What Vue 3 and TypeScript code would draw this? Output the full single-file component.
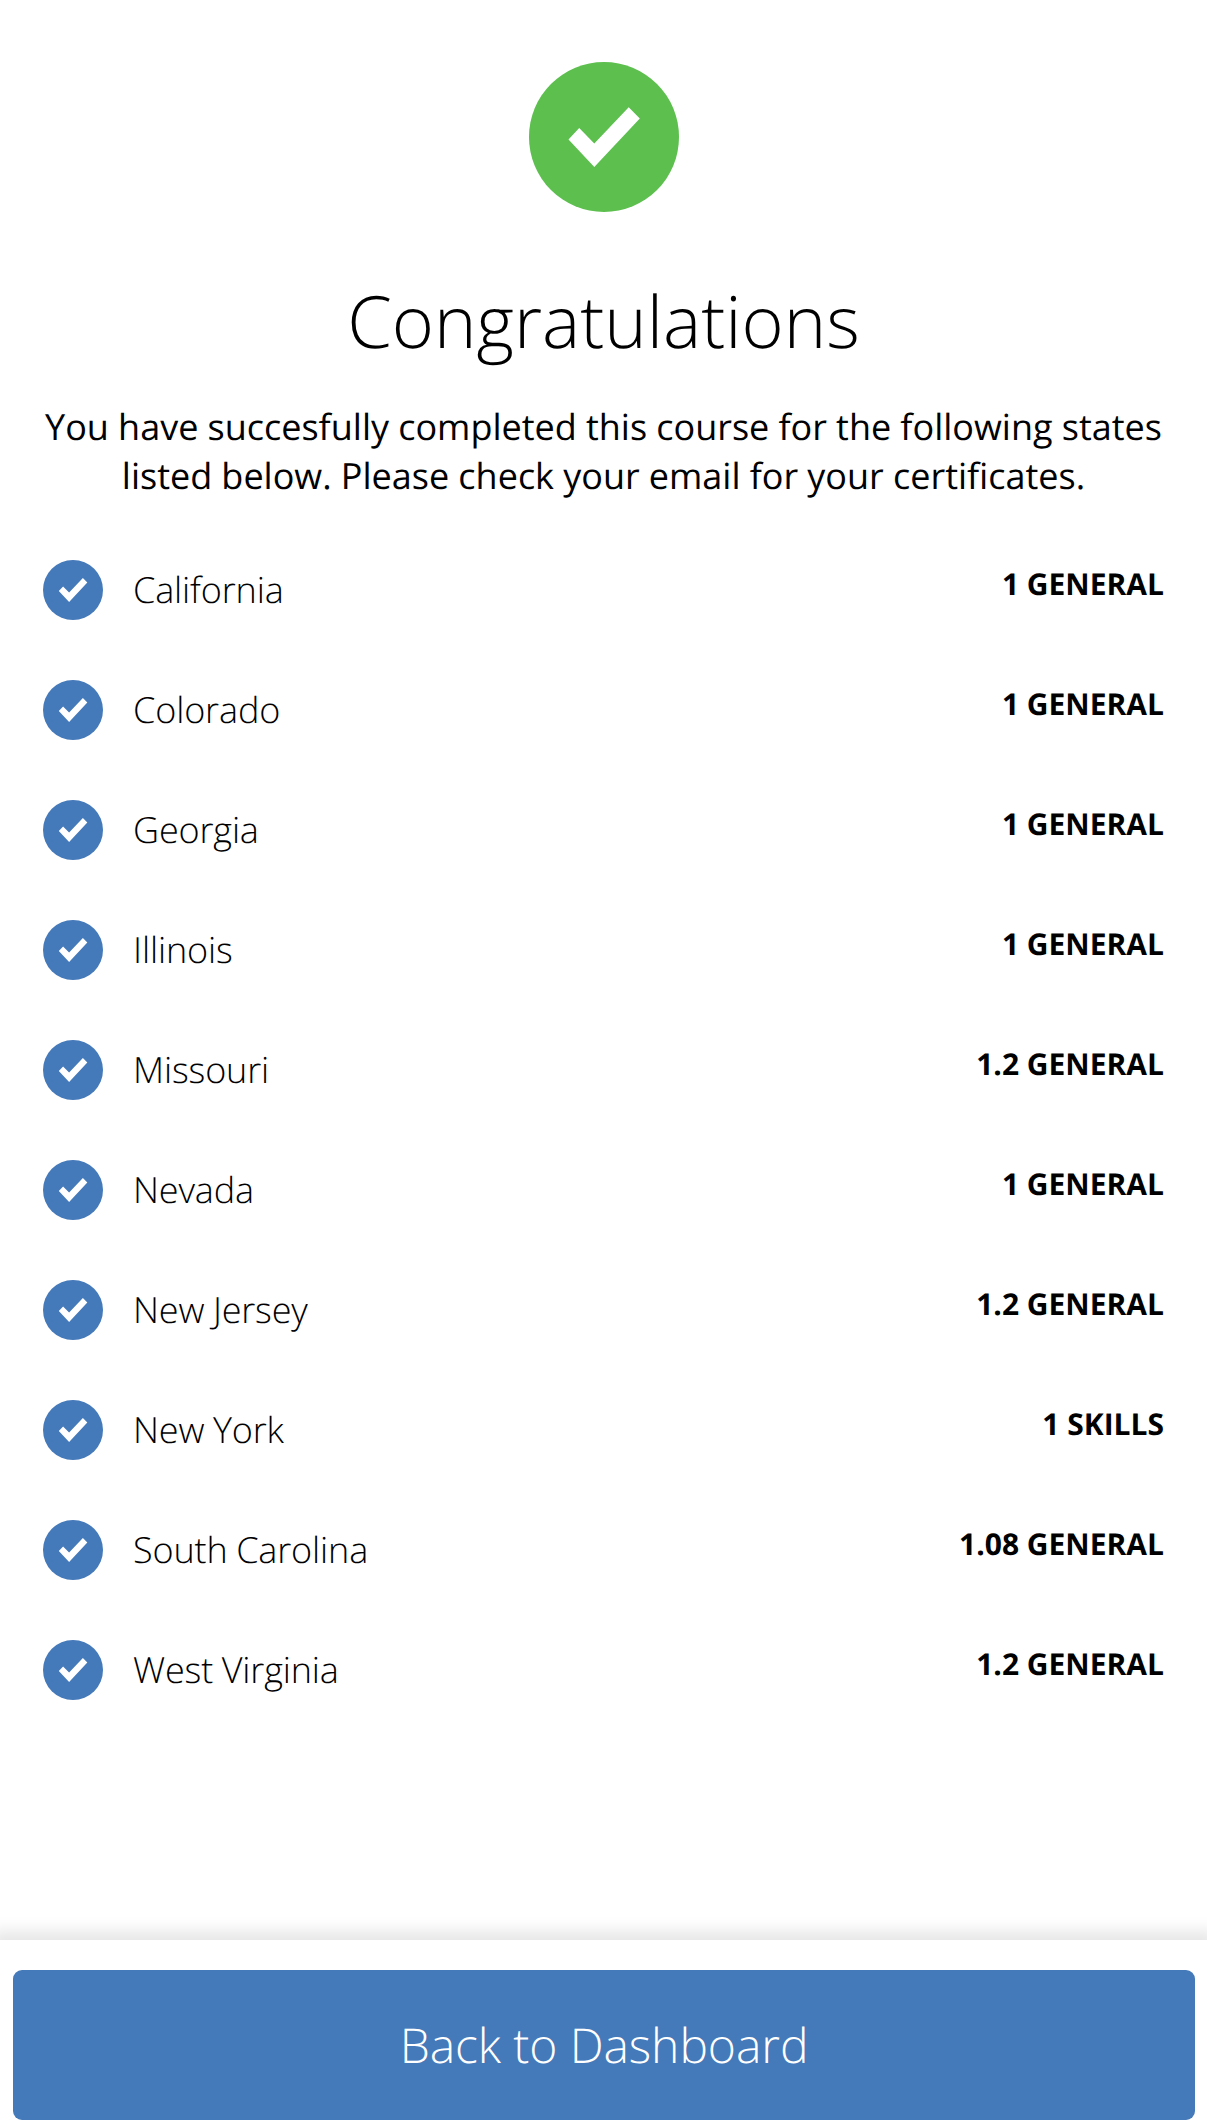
<script setup lang="ts">
interface Credit { state: string; credit: string }

const credits: Credit[] = [
  { state: 'California', credit: '1 GENERAL' },
  { state: 'Colorado', credit: '1 GENERAL' },
  { state: 'Georgia', credit: '1 GENERAL' },
  { state: 'Illinois', credit: '1 GENERAL' },
  { state: 'Missouri', credit: '1.2 GENERAL' },
  { state: 'Nevada', credit: '1 GENERAL' },
  { state: 'New Jersey', credit: '1.2 GENERAL' },
  { state: 'New York', credit: '1 SKILLS' },
  { state: 'South Carolina', credit: '1.08 GENERAL' },
  { state: 'West Virginia', credit: '1.2 GENERAL' },
]
</script>

<template>
  <main class="page">
    <section class="content">
      <svg class="hero" viewBox="0 0 150 150" aria-hidden="true">
        <circle cx="75" cy="75" r="75" fill="#5cbf4e" />
        <path d="M39.5 77.5 L50.2 66 L65.3 81.5 L99.7 45.2 L110.8 56.5 L65.3 105 Z" fill="#fff" />
      </svg>
      <h1>Congratulations</h1>
      <p class="message">You have succesfully completed this course for the following states<br />listed below. Please check your email for your certificates.</p>
      <ul class="list">
        <li v-for="item in credits" :key="item.state" class="row">
          <svg class="check" viewBox="0 0 150 150" aria-hidden="true">
            <circle cx="75" cy="75" r="75" fill="#4479ba" />
            <path d="M39.5 77.5 L50.2 66 L65.3 81.5 L99.7 45.2 L110.8 56.5 L65.3 105 Z" fill="#fff" />
          </svg>
          <span class="state">{{ item.state }}</span>
          <span class="credit">{{ item.credit }}</span>
        </li>
      </ul>
    </section>
    <footer class="footer">
      <button class="button" type="button">Back to Dashboard</button>
    </footer>
  </main>
</template>

<style>
body { margin: 0; background: #fff; }
</style>

<style scoped>
.page {
  display: flex;
  flex-direction: column;
  height: 2128px;
  overflow: hidden;
  box-sizing: border-box;
  color: #000;
  background: #fff;
  font-family: "Open Sans", "Noto Sans", sans-serif;
  text-rendering: geometricPrecision;
}
.content { flex: 1; padding: 62px 43px 0; display: flex; flex-direction: column; align-items: center; }
.hero { width: 150px; height: 150px; flex: none; margin-left: 1px; }
h1 { margin: 60px 0 0; font-size: 72px; line-height: 98px; font-weight: 300; white-space: nowrap; }
.message { margin: 32px 0 0; font-size: 36px; line-height: 49px; text-align: center; white-space: nowrap; word-spacing: -0.2px; }
.list { list-style: none; align-self: stretch; margin: 60px 0 0; padding: 0; }
.row { display: flex; height: 120px; }
.check { width: 60px; height: 60px; flex: none; }
.state { margin-left: 30px; font-size: 36px; line-height: 60px; font-weight: 300; letter-spacing: -0.15px; word-spacing: -0.6px; }
.credit { margin-left: auto; font-size: 30px; line-height: 48px; font-weight: 700; }
.footer { height: 188px; padding: 30px 12px 8px 13px; box-sizing: border-box; box-shadow: 0 0 15px 9px rgba(0, 0, 0, 0.1); }
.button { display: block; width: 100%; height: 150px; padding: 1px 0 0; border: 0; border-radius: 9px; background: #4479ba; color: #fff; font: 300 48px/149px "Open Sans", "Noto Sans", sans-serif; letter-spacing: -0.08px; text-rendering: geometricPrecision; }
</style>
